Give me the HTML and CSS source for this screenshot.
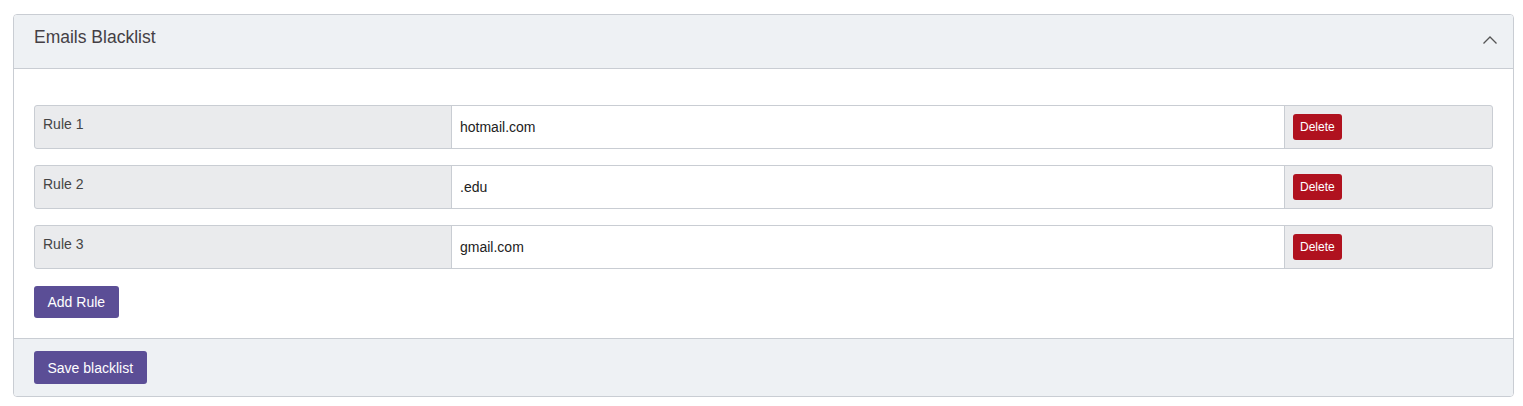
FILE: index.html
```html
<!DOCTYPE html>
<html>
<head>
<meta charset="utf-8">
<link rel="stylesheet" href="styles.css">
</head>
<body>
<div class="card">
  <div class="card-header">
    <h3 class="title">Emails Blacklist</h3>
    <svg class="chevron" width="16" height="10" viewBox="0 0 16 10"><path d="M1.5 8.5 L8 2 L14.5 8.5" fill="none" stroke="#555" stroke-width="1.3"/></svg>
  </div>
  <div class="card-body">
    <div class="rules">
      <div class="rule">
        <div class="label">Rule 1</div>
        <div class="value">hotmail.com</div>
        <div class="actions"><button class="btn-delete">Delete</button></div>
      </div>
      <div class="rule">
        <div class="label">Rule 2</div>
        <div class="value">.edu</div>
        <div class="actions"><button class="btn-delete">Delete</button></div>
      </div>
      <div class="rule">
        <div class="label">Rule 3</div>
        <div class="value">gmail.com</div>
        <div class="actions"><button class="btn-delete">Delete</button></div>
      </div>
    </div>
    <button class="btn-primary">Add Rule</button>
  </div>
  <div class="card-footer">
    <button class="btn-primary">Save blacklist</button>
  </div>
</div>
</body>
</html>
```
FILE: styles.css
```css
* { box-sizing: border-box; }
body {
  margin: 0;
  padding: 14px 9px 0 13px;
  font-family: "Liberation Sans", Arial, sans-serif;
  background: #fff;
}
.card {
  border: 1px solid #c9cdd3;
  border-radius: 4px;
  overflow: hidden;
}
.card-header {
  background: #eef1f4;
  border-bottom: 1px solid #c9cdd3;
  height: 54px;
  display: flex;
  justify-content: space-between;
  align-items: flex-start;
  padding: 0 15px 0 20px;
}
.title {
  margin: 11px 0 0;
  font-size: 17.5px;
  font-weight: normal;
  color: #443f45;
  line-height: 22px;
}
.chevron { margin-top: 20px; }
.card-body {
  padding: 36px 20px 20px;
}
.rules {
  display: flex;
  flex-direction: column;
  gap: 16px;
  margin-bottom: 17px;
}
.rule {
  display: flex;
  height: 44px;
  border: 1px solid #c9cdd3;
  border-radius: 3px;
  background: #eaebed;
}
.label {
  width: 417px;
  padding: 10px 8px;
  font-size: 14px;
  line-height: 17px;
  color: #444;
  border-right: 1px solid #c9cdd3;
}
.value {
  flex: 1;
  background: #fff;
  padding: 0 8px;
  display: flex;
  align-items: center;
  font-size: 14px;
  color: #222;
}
.actions {
  width: 208px;
  border-left: 1px solid #c9cdd3;
  padding: 8px 8px;
}
.btn-delete {
  background: #b0121f;
  color: #fff;
  border: none;
  border-radius: 3px;
  height: 26px;
  padding: 0 7px;
  font-family: "Liberation Sans", Arial, sans-serif;
  font-size: 12px;
}
.btn-primary {
  background: #5b4e96;
  color: #fff;
  border: none;
  border-radius: 3px;
  height: 32px;
  padding: 0 13.5px;
  font-family: "Liberation Sans", Arial, sans-serif;
  font-size: 14px;
  display: block;
}
.card-footer {
  background: #eef1f4;
  border-top: 1px solid #c9cdd3;
  padding: 12px 20px 12px;
}
.card-footer .btn-primary { height: 33px; }
```
